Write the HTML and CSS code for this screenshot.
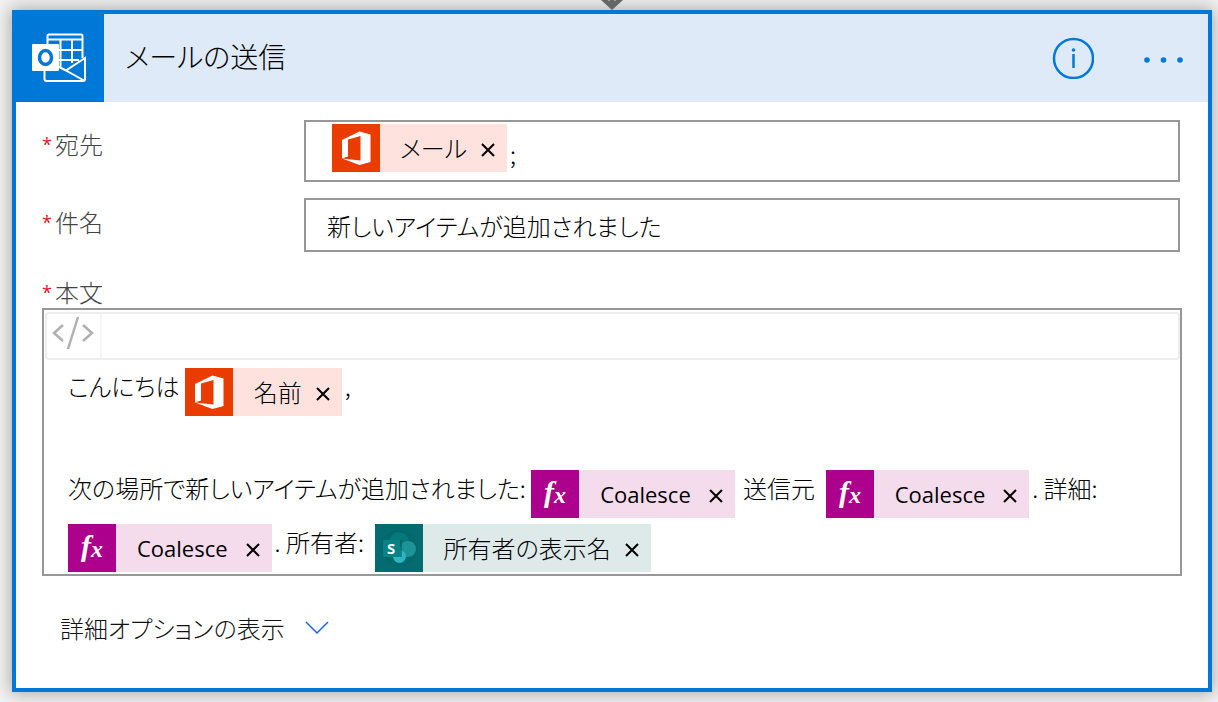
FILE: index.html
```html
<!DOCTYPE html>
<html lang="ja">
<head>
<meta charset="utf-8">
<meta name="viewport" content="width=device-width, initial-scale=1">
<title>メールの送信</title>
<link rel="stylesheet" href="styles.css">
</head>
<body>
<svg class="symbols" aria-hidden="true">
  <symbol id="office" viewBox="0 0 48 48">
    <path fill="#fff" d="M10 16 27.500 7.500 38.500 10.500V38L27.500 41 10 34.500 28.500 36.500V12L16 15.500V32.500L10 34.500Z"/>
  </symbol>
  <symbol id="close" viewBox="0 0 14 14">
    <path d="M1 1 13 13M13 1 1 13" fill="none" stroke="#000" stroke-width="2"/>
  </symbol>
</svg>

<svg class="connector" viewBox="0 0 24 10" aria-hidden="true">
  <path d="M1 0H23L12 10Z" fill="#666"/><path d="M9 0v1M15 0v1" stroke="#ddd"/>
</svg>

<main class="card">
  <header class="card-head">
    <div class="card-logo">
      <svg viewBox="0 0 56 50" aria-hidden="true">
        <g fill="none" stroke="#fff" stroke-width="2">
          <path d="M16.500 11V3Q16.500 1.500 18 1.500H50Q51.500 1.500 51.500 3V25M17 6.500H51M29.500 7V34M41 7V30M28 17H51M28 27H48"/>
          <path d="M13.500 38V46Q13.500 48 15.500 48H52Q54 48 54 46V25L35 37.500 53 47.500M28 34 35 37.500"/>
        </g>
        <rect x="1" y="11" width="27" height="27" rx="1" fill="#fff"/>
        <ellipse cx="14.500" cy="24.500" rx="6" ry="7" fill="none" stroke="#0078d7" stroke-width="3.500"/>
      </svg>
    </div>
    <h1 class="card-title">メールの送信</h1>
    <div class="card-actions">
      <button class="icon-button info" type="button" aria-label="情報">
        <svg viewBox="0 0 42 42"><circle cx="21.500" cy="21.500" r="19.500" fill="none" stroke="#0078d7" stroke-width="2.500"/><path d="M21.500 17V31" stroke="#0078d7" stroke-width="2.500"/><circle cx="21.500" cy="13" r="1.800" fill="#0078d7"/></svg>
      </button>
      <button class="icon-button more" type="button" aria-label="その他">
        <svg viewBox="0 0 42 42"><g fill="#0078d7"><circle cx="5" cy="23" r="2.800"/><circle cx="21.500" cy="23" r="2.800"/><circle cx="38" cy="23" r="2.800"/></g></svg>
      </button>
    </div>
  </header>

  <form class="card-body">
    <div class="field">
      <span class="label" id="to-label"><span class="required">*</span>宛先</span>
      <div class="control recipients" role="group" aria-labelledby="to-label">
        <span class="token office"><svg class="token-icon"><use href="#office"/></svg><span>メール</span><button type="button" aria-label="メールを削除"><svg><use href="#close"/></svg></button></span><span>;</span>
      </div>
    </div>

    <div class="field">
      <label class="label" for="subject"><span class="required">*</span>件名</label>
      <input class="control subject" id="subject" type="text" value="新しいアイテムが追加されました">
    </div>

    <div class="field-stacked">
      <span class="label" id="body-label"><span class="required">*</span>本文</span>
      <div class="editor" role="group" aria-labelledby="body-label">
        <div class="toolbar">
          <button class="code-button" type="button" aria-label="コード ビュー">
            <svg viewBox="0 0 42 34"><path d="M11 9 2 17 11 25M31 9 40 17 31 25M26 1 16 33" fill="none" stroke="#b0b0b0" stroke-width="2.500"/></svg>
          </button>
        </div>
        <div class="message">
          <p>こんにちは <span class="token office"><svg class="token-icon"><use href="#office"/></svg><span>名前</span><button type="button" aria-label="名前を削除"><svg><use href="#close"/></svg></button></span>,</p>
          <p>次の場所で新しいアイテムが追加されました: <span class="token expression"><svg class="token-icon" viewBox="0 0 48 48"><text x="13" y="32" class="glyph-f">f<tspan class="glyph-x" dy="1">x</tspan></text></svg><span>Coalesce</span><button type="button" aria-label="Coalesce を削除"><svg><use href="#close"/></svg></button></span> 送信元&nbsp; <span class="token expression"><svg class="token-icon" viewBox="0 0 48 48"><text x="13" y="32" class="glyph-f">f<tspan class="glyph-x" dy="1">x</tspan></text></svg><span>Coalesce</span><button type="button" aria-label="Coalesce を削除"><svg><use href="#close"/></svg></button></span>. 詳細: <span class="token expression"><svg class="token-icon" viewBox="0 0 48 48"><text x="13" y="32" class="glyph-f">f<tspan class="glyph-x" dy="1">x</tspan></text></svg><span>Coalesce</span><button type="button" aria-label="Coalesce を削除"><svg><use href="#close"/></svg></button></span>. 所有者:&nbsp; <span class="token sharepoint"><svg class="token-icon" viewBox="0 0 48 48"><circle cx="24" cy="24" r="18" fill="#015c60" opacity=".25"/><circle cx="24" cy="18" r="10" fill="#05787b"/><circle cx="33" cy="25" r="8" fill="#1d9297"/><circle cx="24.500" cy="32.500" r="6.500" fill="#2bb6c2"/><path fill="#04595d" d="M17 16h10v17h-8z" opacity=".55"/><rect x="8" y="16" width="17" height="17" rx="1" fill="#078286"/><text x="12" y="30" class="glyph-s">S</text></svg><span>所有者の表示名</span><button type="button" aria-label="所有者の表示名を削除"><svg><use href="#close"/></svg></button></span></p>
        </div>
      </div>
    </div>

    <button class="advanced" type="button">詳細オプションの表示
      <svg viewBox="0 0 24 14" aria-hidden="true"><path d="M1 1 12 12 23 1" fill="none" stroke="#1a66e8" stroke-width="1.500"/></svg>
    </button>
  </form>
</main>
</body>
</html>
```
FILE: styles.css
```css
* {
  box-sizing: border-box;
}

body {
  margin: 0;
  padding: 0 6px 10px 12px;
  background: #f3f3f3;
  color: #000;
  font: 300 24px/36px "Noto Sans CJK JP", sans-serif;
  font-feature-settings: "palt";
}

button,
input {
  margin: 0;
  padding: 0;
  border: 0;
  background: none;
  color: inherit;
  font: inherit;
  font-feature-settings: inherit;
}

button {
  cursor: pointer;
}

svg {
  display: block;
}

.symbols {
  position: absolute;
  width: 0;
  height: 0;
}

.connector {
  width: 24px;
  height: 10px;
  margin: 0 auto;
}

.card {
  border: 4px solid #0078d7;
  background: #fff;
  box-shadow: 0 0 16px 2px rgba(0, 0, 0, 0.3);
}

.card-head {
  display: flex;
  align-items: center;
  background: #deeaf8;
}

.card-logo {
  display: flex;
  align-items: center;
  width: 88px;
  height: 88px;
  padding-left: 15px;
  background: #0078d7;
}

.card-logo svg {
  width: 56px;
  height: 50px;
}

.card-title {
  flex: 1;
  margin: 0;
  padding: 0 0 4px 21px;
  font-size: 28px;
  font-weight: 300;
}

.card-actions {
  display: flex;
  gap: 48px;
  padding-right: 24px;
}

.icon-button,
.icon-button svg {
  width: 42px;
  height: 42px;
}

.card-body {
  padding: 18px 26px 42px;
}

.field {
  display: flex;
  align-items: flex-start;
  margin: 0 2px 16px 0;
}

.label {
  display: flex;
  flex: none;
  gap: 4px;
  width: 262px;
  padding-top: 6px;
  color: #444;
}

.required {
  width: 9px;
  color: #e81123;
  font-family: "Open Sans", sans-serif;
  font-size: 18px;
  font-weight: 400;
}

.control {
  flex: 1;
  min-width: 0;
  border: 2px solid #979797;
}

.recipients {
  display: flex;
  align-items: flex-end;
  padding: 2px 26px 8px;
}

.subject {
  height: 54px;
  padding: 0 21px;
}

.field-stacked {
  margin-top: 22px;
}

.field-stacked .label {
  height: 34px;
  padding-top: 0;
}

.editor {
  border: 2px solid #979797;
}

.toolbar {
  margin: 2px 0 0 1px;
  border: 2px solid #eee;
  border-radius: 4px;
}

.code-button {
  display: block;
  padding: 2px 6px 8px 5px;
  border-right: 2px solid #f7f7f7;
}

.code-button svg {
  width: 42px;
  height: 34px;
}

.message {
  padding: 2px 24px;
}

.message p {
  margin: 0 0 48px;
  line-height: 48px;
}

.message p:last-child {
  margin: 0;
}

.token {
  display: inline-flex;
  align-items: center;
  height: 48px;
  margin-right: 3px;
  line-height: 36px;
}

.message .token {
  vertical-align: -20px;
}

.token > span {
  padding: 0 14px 0 20px;
}

.message .token > span {
  padding-left: 21px;
}

.token button svg {
  width: 14px;
  height: 14px;
}

.token button {
  padding: 4px 12px 0 0;
}

.token-icon {
  width: 48px;
  height: 48px;
}

.office {
  background: #fde2dd;
}

.office .token-icon {
  background: #eb3c00;
}

.expression {
  background: #f5dced;
  font-family: "Open Sans", sans-serif;
  font-weight: 400;
  font-size: 22px;
}

.token.expression > span {
  padding-right: 18px;
}

.expression .token-icon {
  background: #ad008c;
}

.sharepoint {
  background: #deeaea;
}

.sharepoint .token-icon {
  background: #036c70;
}

.glyph-f,
.glyph-x {
  fill: #fff;
  font: italic 700 30px "Liberation Serif", serif;
}

.glyph-x {
  font-size: 24px;
}

.glyph-s {
  fill: #fff;
  font: 700 15px "Open Sans", sans-serif;
}

.advanced {
  display: flex;
  align-items: center;
  gap: 20px;
  margin: 34px 0 0 18px;
  color: #111;
}

.advanced svg {
  width: 24px;
  height: 14px;
}
```
